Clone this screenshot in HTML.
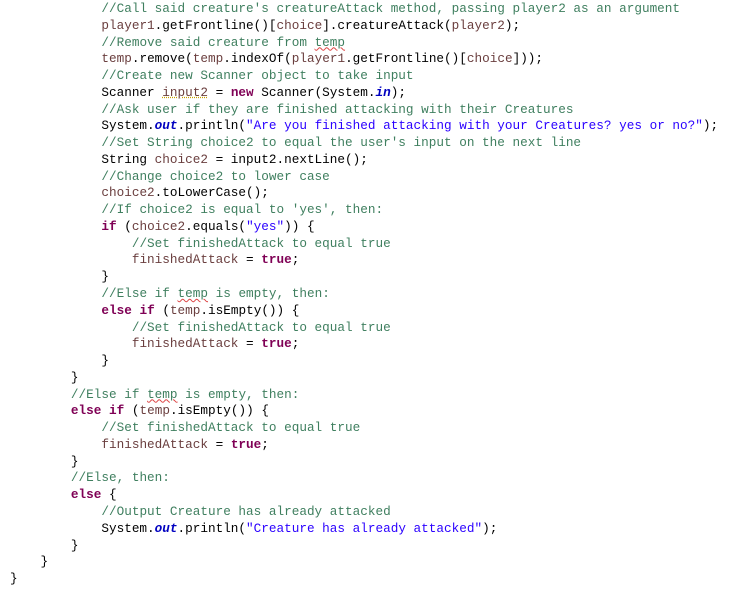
<!DOCTYPE html>
<html><head><meta charset="utf-8"><style>
html,body{margin:0;padding:0;background:#fff;width:739px;height:589px;overflow:hidden}
pre{margin:0;position:absolute;left:10px;top:1px;font-family:"Liberation Mono",monospace;font-size:12.7px;line-height:16.76px;color:#000}
.c{color:#3F7F5F}.k{color:#7F0055;font-weight:bold}.s{color:#2A00FF}.v{color:#6A3E3E}.f{color:#0000C0;font-weight:bold;font-style:italic}
.w{text-decoration:underline dotted #c8a000}
.r{text-decoration:underline wavy #d44;text-decoration-thickness:1px}
</style></head><body><pre>            <span class="c">//Call said creature's creatureAttack method, passing player2 as an argument</span>
            <span class="v">player1</span>.getFrontline()[<span class="v">choice</span>].creatureAttack(<span class="v">player2</span>);
            <span class="c">//Remove said creature from <span class="r">temp</span></span>
            <span class="v">temp</span>.remove(<span class="v">temp</span>.indexOf(<span class="v">player1</span>.getFrontline()[<span class="v">choice</span>]));
            <span class="c">//Create new Scanner object to take input</span>
            Scanner <span class="v w">input2</span> = <span class="k">new</span> Scanner(System.<span class="f">in</span>);
            <span class="c">//Ask user if they are finished attacking with their Creatures</span>
            System.<span class="f">out</span>.println(<span class="s">"Are you finished attacking with your Creatures? yes or no?"</span>);
            <span class="c">//Set String choice2 to equal the user's input on the next line</span>
            String <span class="v">choice2</span> = input2.nextLine();
            <span class="c">//Change choice2 to lower case</span>
            <span class="v">choice2</span>.toLowerCase();
            <span class="c">//If choice2 is equal to 'yes', then:</span>
            <span class="k">if</span> (<span class="v">choice2</span>.equals(<span class="s">"yes"</span>)) {
                <span class="c">//Set finishedAttack to equal true</span>
                <span class="v">finishedAttack</span> = <span class="k">true</span>;
            }
            <span class="c">//Else if <span class="r">temp</span> is empty, then:</span>
            <span class="k">else</span> <span class="k">if</span> (<span class="v">temp</span>.isEmpty()) {
                <span class="c">//Set finishedAttack to equal true</span>
                <span class="v">finishedAttack</span> = <span class="k">true</span>;
            }
        }
        <span class="c">//Else if <span class="r">temp</span> is empty, then:</span>
        <span class="k">else</span> <span class="k">if</span> (<span class="v">temp</span>.isEmpty()) {
            <span class="c">//Set finishedAttack to equal true</span>
            <span class="v">finishedAttack</span> = <span class="k">true</span>;
        }
        <span class="c">//Else, then:</span>
        <span class="k">else</span> {
            <span class="c">//Output Creature has already attacked</span>
            System.<span class="f">out</span>.println(<span class="s">"Creature has already attacked"</span>);
        }
    }
}</pre></body></html>
